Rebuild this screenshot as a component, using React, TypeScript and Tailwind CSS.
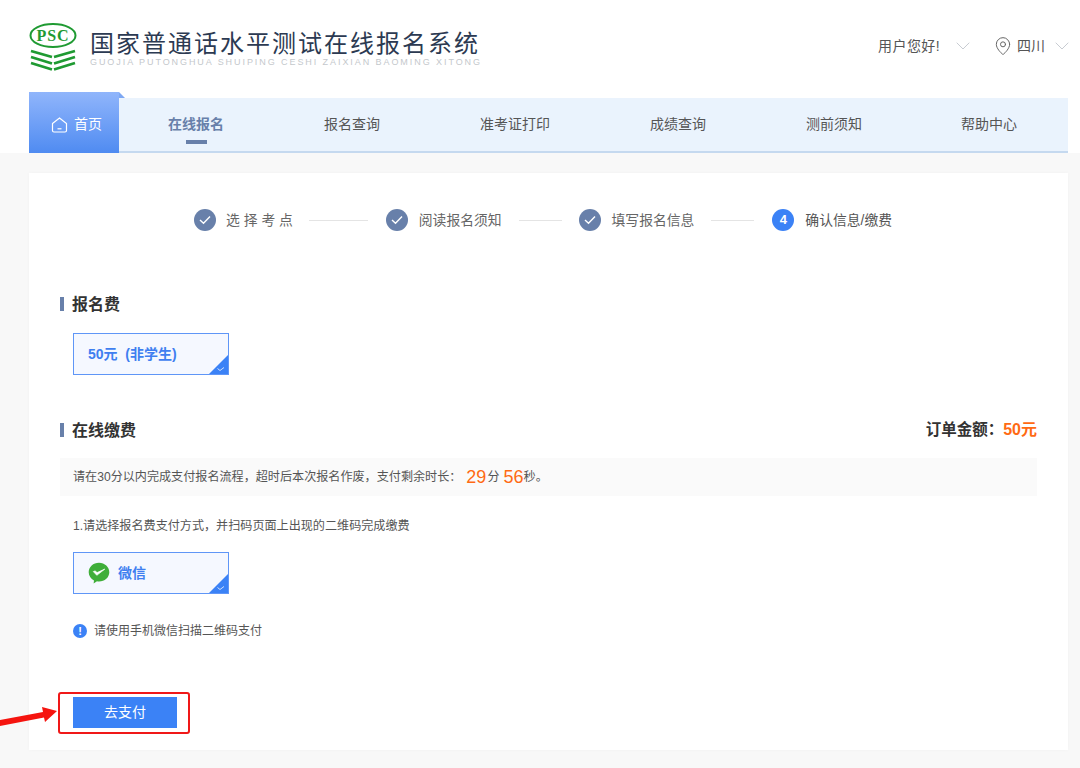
import React from "react";
import { ChevronDown, MapPin } from "lucide-react";

const font = { fontFamily: '"Liberation Sans","Noto Sans CJK SC",sans-serif' };

function Corner() {
  return (
    <svg className="absolute right-0 bottom-0" width="19" height="19" viewBox="0 0 19 19">
      <path d="M19 0V19H0Z" fill="#3b82f6" />
      <path d="M8.5 13.5L11 15.5L15 12.5" fill="none" stroke="#cfe0fb" strokeWidth="1" />
    </svg>
  );
}

function Check() {
  return (
    <span className="w-[22px] h-[22px] rounded-full bg-[#6880aa] flex items-center justify-center shrink-0">
      <svg width="12" height="10" viewBox="0 0 12 10">
        <path d="M1 5L4.5 8.2L11 1.5" fill="none" stroke="#ffffff" strokeWidth="1.4" />
      </svg>
    </span>
  );
}

function Title({ children }: { children: React.ReactNode }) {
  return (
    <div className="flex items-center h-[22px]">
      <span className="w-[4px] h-[14px] bg-[#6880aa]" />
      <span className="ml-[8px] mt-[1px] text-[16px] font-bold text-[#333333]">{children}</span>
    </div>
  );
}

function Option({ children }: { children: React.ReactNode }) {
  return (
    <div className="relative ml-[13px] w-[156px] h-[42px] border border-[#5f96f7] bg-[#f5f8ff] flex items-center pl-[14px] text-[#3f7ff0] text-[14px] font-bold">
      {children}
      <Corner />
    </div>
  );
}

const nav = ["报名查询", "准考证打印", "成绩查询", "测前须知"];

export default function App() {
  return (
    <div style={font} className="relative w-[1080px] h-[768px] overflow-hidden bg-[#f8f8f8]">
      <div className="bg-white h-[153px] flex flex-col">
        <div className="h-[92px] pl-[29px] pr-[6px] flex items-start">
          <svg className="mt-[23px] shrink-0" width="48" height="48" viewBox="0 0 48 48">
            <ellipse cx="24" cy="12.5" rx="22.5" ry="11.500" fill="#ffffff" stroke="#1f9a32" strokeWidth="2" />
            <text x="24" y="18" textAnchor="middle" fontFamily='"Liberation Serif",serif' fontWeight="700" fontSize="16" letterSpacing="1" fill="#1f9a32">PSC</text>
            <g fill="none" stroke="#1f9a32" strokeWidth="2.8">
              <path d="M2 28L23 34M46 28L25 34" />
              <path d="M2 34L23 40.500M46 34L25 40.500" />
              <path d="M2 40L23 46.500M46 40L25 46.500" />
            </g>
          </svg>
          <div className="ml-[13px] mt-[30px] w-[400px]">
            <div className="text-[24px] leading-[27px] tracking-[2px] text-[#2c3a52] whitespace-nowrap">国家普通话水平测试在线报名系统</div>
            <div className="text-[9px] leading-[11px] tracking-[1.93px] text-[#c4c8cc] whitespace-nowrap">GUOJIA PUTONGHUA SHUIPING CESHI ZAIXIAN BAOMING XITONG</div>
          </div>
          <div className="ml-auto mt-[34px] flex items-center text-[14px] leading-[24px] text-[#555555]">
            <span className="tracking-[0.4px]">用户您好!</span>
            <ChevronDown className="ml-[11px] text-[#c8ccd2]" size={24} strokeWidth={1} />
            <MapPin className="ml-[18px] text-[#666666]" size={20} strokeWidth={1.2} />
            <span className="ml-[4px]">四川</span>
            <ChevronDown className="ml-[5px] text-[#c8ccd2]" size={24} strokeWidth={1} />
          </div>
        </div>
        <div className="relative ml-[29px] w-[1039px] h-[61px] flex items-end">
          <div className="relative z-10 w-[90px] h-[61px] bg-gradient-to-b from-[#90b5fb] to-[#4f8bf1] flex items-center pl-[22px] pt-[4px] text-white text-[14px]">
            <svg width="17" height="16" viewBox="0 0 17 16" className="mr-[6px]">
              <path d="M1.5 6.5L8.5 1L15.5 6.5V13.5Q15.5 15 14 15H3Q1.5 15 1.5 13.5Z" fill="none" stroke="#ffffff" strokeWidth="1.2" />
              <path d="M6.5 11.8H10.5" stroke="#ffffff" strokeWidth="1.2" />
            </svg>
            首页
            <svg className="absolute left-full top-0" width="6" height="6" viewBox="0 0 6 6">
              <path d="M0 0L6 6H0Z" fill="#7ea8f3" />
            </svg>
          </div>
          <div className="flex-1 h-[55px] bg-[#eaf3fd] border-b-2 border-[#c5d9ef] flex items-center pl-[49px] gap-[100px] text-[14px] text-[#555555] whitespace-nowrap">
            <div className="relative font-bold text-[#6880aa]">
              在线报名
              <span className="absolute left-[18px] top-[26px] w-[21px] h-[4px] bg-[#6880aa]" />
            </div>
            {nav.map((n) => (
              <div key={n}>{n}</div>
            ))}
            <div className="-ml-[1px]">帮助中心</div>
          </div>
        </div>
      </div>

      <div className="mt-[20px] ml-[29px] w-[1039px] h-[577px] bg-white shadow-[0_0_4px_rgba(0,0,0,0.03)] px-[31px] flex flex-col">
        <div className="mt-[36px] h-[22px] ml-[134px] flex items-center text-[13.8px] text-[#666666] whitespace-nowrap">
          <Check />
          <span className="ml-[10px] mt-[2px] tracking-[3.9px]">选择考点</span>
          <span className="ml-[12px] w-[59px] h-px bg-[#e4e4e4]" />
          <span className="ml-[18px]"><Check /></span>
          <span className="ml-[11px] mt-[2px]">阅读报名须知</span>
          <span className="ml-[17px] w-[43px] h-px bg-[#e4e4e4]" />
          <span className="ml-[17px]"><Check /></span>
          <span className="ml-[11px] mt-[2px]">填写报名信息</span>
          <span className="ml-[17px] w-[43px] h-px bg-[#e4e4e4]" />
          <span className="ml-[18px] w-[22px] h-[22px] rounded-full bg-[#3b82f6] text-white text-[13px] font-bold flex items-center justify-center">4</span>
          <span className="ml-[11px] mt-[2px] text-[#555555]">确认信息/缴费</span>
        </div>

        <div className="mt-[62px]"><Title>报名费</Title></div>
        <div className="mt-[18px]"><Option>50元&nbsp;&nbsp;(非学生)</Option></div>

        <div className="mt-[43px] flex items-center justify-between">
          <Title>在线缴费</Title>
          <div className="text-[15.5px] font-bold text-[#333333]">
            订单金额：<span className="text-[16px] text-[#ff6a13]">50元</span>
          </div>
        </div>
        <div className="mt-[16px] h-[38px] bg-[#fafafa] pl-[13px] flex items-center text-[12.1px] text-[#555555] whitespace-nowrap">
          请在30分以内完成支付报名流程，超时后本次报名作废，支付剩余时长：
          <span className="ml-[5px] text-[18px] text-[#ff6a13]">29</span>
          <span className="ml-[1px]">分</span>
          <span className="ml-[4px] text-[18px] text-[#ff6a13]">56</span>
          <span>秒。</span>
        </div>
        <div className="mt-[21px] ml-[13px] text-[12.1px] leading-[18px] text-[#555555]">1.请选择报名费支付方式，并扫码页面上出现的二维码完成缴费</div>
        <div className="mt-[17px]">
          <Option>
            <svg width="22" height="22" viewBox="0 0 22 22" className="mr-[8px]">
              <path d="M11 .8C5.2.8.7 5 .7 10.2c0 3.6 2.1 6.6 5.3 8.2l-.4 3.2 3.4-2.3c.6.1 1.3.2 2 .2 5.800 0 10.300-4.200 10.300-9.300S16.800.8 11 .8Z" fill="#3fae39" />
              <path d="M5.300 9.600l3.500 3.700 8-6.200-7.700 3.500-2-1.700Z" fill="#ffffff" stroke="#ffffff" strokeWidth="0.7" />
            </svg>
            微信
          </Option>
        </div>
        <div className="mt-[28px] ml-[13px] flex items-center text-[12px] leading-[18px] text-[#555555]">
          <span className="w-[14px] h-[14px] rounded-full bg-[#3b82f6] text-white text-[11px] font-bold leading-none flex items-center justify-center">!</span>
          <span className="ml-[7px]">请使用手机微信扫描二维码支付</span>
        </div>
        <button className="mt-[57px] ml-[13px] w-[104px] h-[31px] bg-[#3b82f6] text-white text-[14px]" style={font}>去支付</button>
      </div>

      <div className="absolute left-[58px] top-[692px] w-[132px] h-[42px] border-[2px] border-[#f01818] rounded-[3px]" />
      <svg className="absolute left-0 top-[702px]" width="60" height="26" viewBox="0 0 60 26">
        <path d="M0 18L43 10L42 5L57 9L45 20L44 15.500L0 24Z" fill="#f5140f" />
      </svg>
    </div>
  );
}
